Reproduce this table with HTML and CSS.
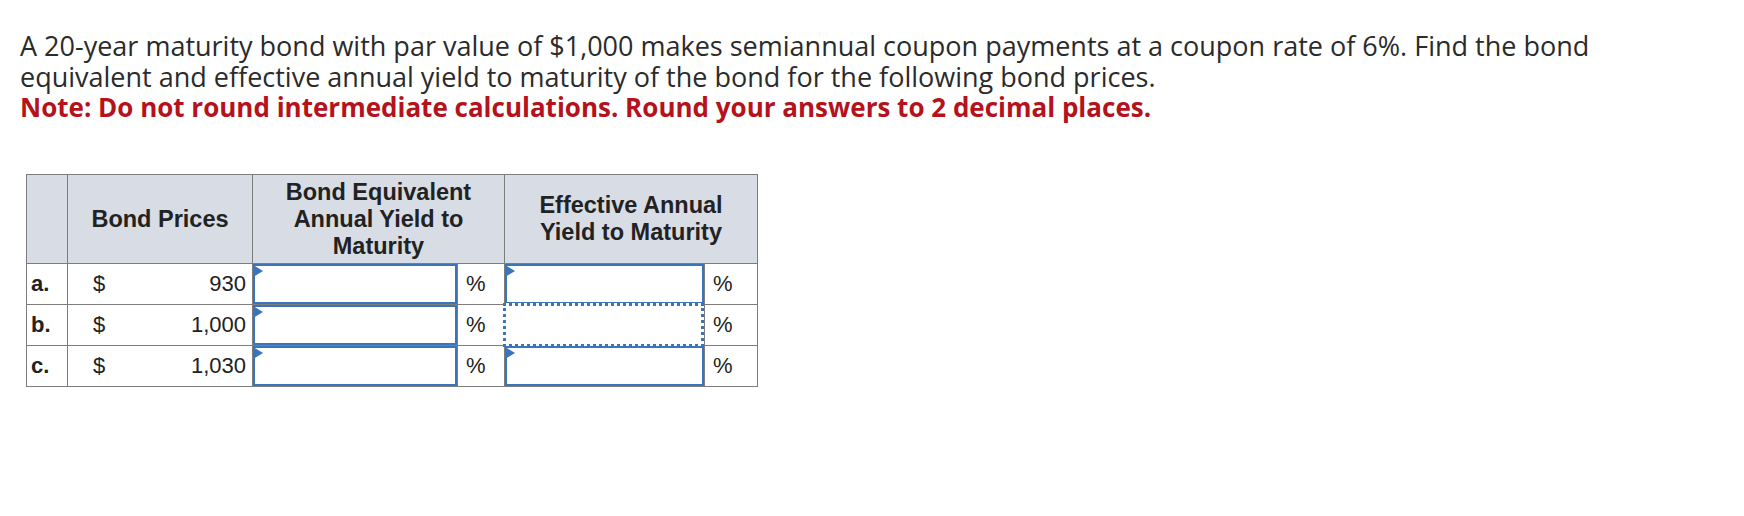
FILE: index.html
```html
<!DOCTYPE html>
<html>
<head>
<meta charset="utf-8">
<link rel="stylesheet" href="styles.css">
</head>
<body>
<div class="page">
  <div class="question">
    <div class="line">A 20-year maturity bond with par value of $1,000 makes semiannual coupon payments at a coupon rate of 6%. Find the bond</div>
    <div class="line">equivalent and effective annual yield to maturity of the bond for the following bond prices.</div>
    <div class="line note">Note: Do not round intermediate calculations. Round your answers to 2 decimal places.</div>
  </div>
  <table class="grid">
    <colgroup>
      <col class="c1"><col class="c2"><col class="c3a"><col class="c3b"><col class="c4a"><col class="c4b">
    </colgroup>
    <thead>
      <tr>
        <th></th>
        <th>Bond Prices</th>
        <th colspan="2">Bond Equivalent<br>Annual Yield to<br>Maturity</th>
        <th colspan="2">Effective Annual<br>Yield to Maturity</th>
      </tr>
    </thead>
    <tbody>
      <tr>
        <td class="lbl">a.</td>
        <td class="price"><span class="cur">$</span><span class="amt">930</span></td>
        <td class="inp"><div class="box"><span class="flag"></span></div></td>
        <td class="pct">%</td>
        <td class="inp"><div class="box"><span class="flag"></span></div></td>
        <td class="pct">%</td>
      </tr>
      <tr>
        <td class="lbl">b.</td>
        <td class="price"><span class="cur">$</span><span class="amt">1,000</span></td>
        <td class="inp"><div class="box"><span class="flag"></span></div></td>
        <td class="pct">%</td>
        <td class="inp"><div class="box focus"></div></td>
        <td class="pct">%</td>
      </tr>
      <tr>
        <td class="lbl">c.</td>
        <td class="price"><span class="cur">$</span><span class="amt">1,030</span></td>
        <td class="inp"><div class="box"><span class="flag"></span></div></td>
        <td class="pct">%</td>
        <td class="inp"><div class="box"><span class="flag"></span></div></td>
        <td class="pct">%</td>
      </tr>
    </tbody>
  </table>
</div>
</body>
</html>
```

FILE: styles.css
```css
html, body {
  margin: 0;
  padding: 0;
  background: #ffffff;
}
.page {
  padding: 30px 20px 0 20px;
}
.question {
  font-family: "Open Sans", Lato, sans-serif;
  font-size: 27px;
  line-height: 31px;
  color: #2b2b2b;
}
.line {
  white-space: nowrap;
  height: 31px;
  overflow: visible;
}
.note {
  color: #b5121b;
  font-weight: bold;
  font-size: 26px;
}
.grid {
  margin-top: 51px;
  margin-left: 6px;
  border-collapse: collapse;
  table-layout: fixed;
  width: 731px;
  font-family: "Liberation Sans", Arial, sans-serif;
  font-size: 23.5px;
  color: #222222;
}
.c1 { width: 41px; }
.c2 { width: 185px; }
.c3a { width: 205px; }
.c3b { width: 47px; }
.c4a { width: 200px; }
.c4b { width: 53px; }
.grid th, .grid td {
  border: 1px solid #7d7d7d;
  padding: 0;
}
.grid th {
  background: #d8dce5;
  height: 88px;
  font-weight: bold;
  line-height: 27px;
  text-align: center;
  vertical-align: middle;
}
.grid td {
  height: 40px;
  vertical-align: middle;
}
.lbl {
  font-weight: bold;
  font-size: 22px;
  padding-left: 4px !important;
}
.price {
  padding: 0 6px 0 25px !important;
  white-space: nowrap;
  font-size: 22px;
}
.cur {
  float: left;
}
.amt {
  float: right;
}
.pct {
  padding-left: 8px !important;
  font-size: 22px;
}
.box {
  position: relative;
  height: 36px;
  border: 2px solid #3a74bb;
  background: #ffffff;
}
.box.focus {
  border: 3px dotted #3a74bb;
  height: 38px;
  margin: -2px 0 -2px -2px;
}
.flag {
  position: absolute;
  left: -2px;
  top: -1px;
  width: 0;
  height: 0;
  border-top: 6px solid transparent;
  border-bottom: 6px solid transparent;
  border-left: 10px solid #3a74bb;
}
```
